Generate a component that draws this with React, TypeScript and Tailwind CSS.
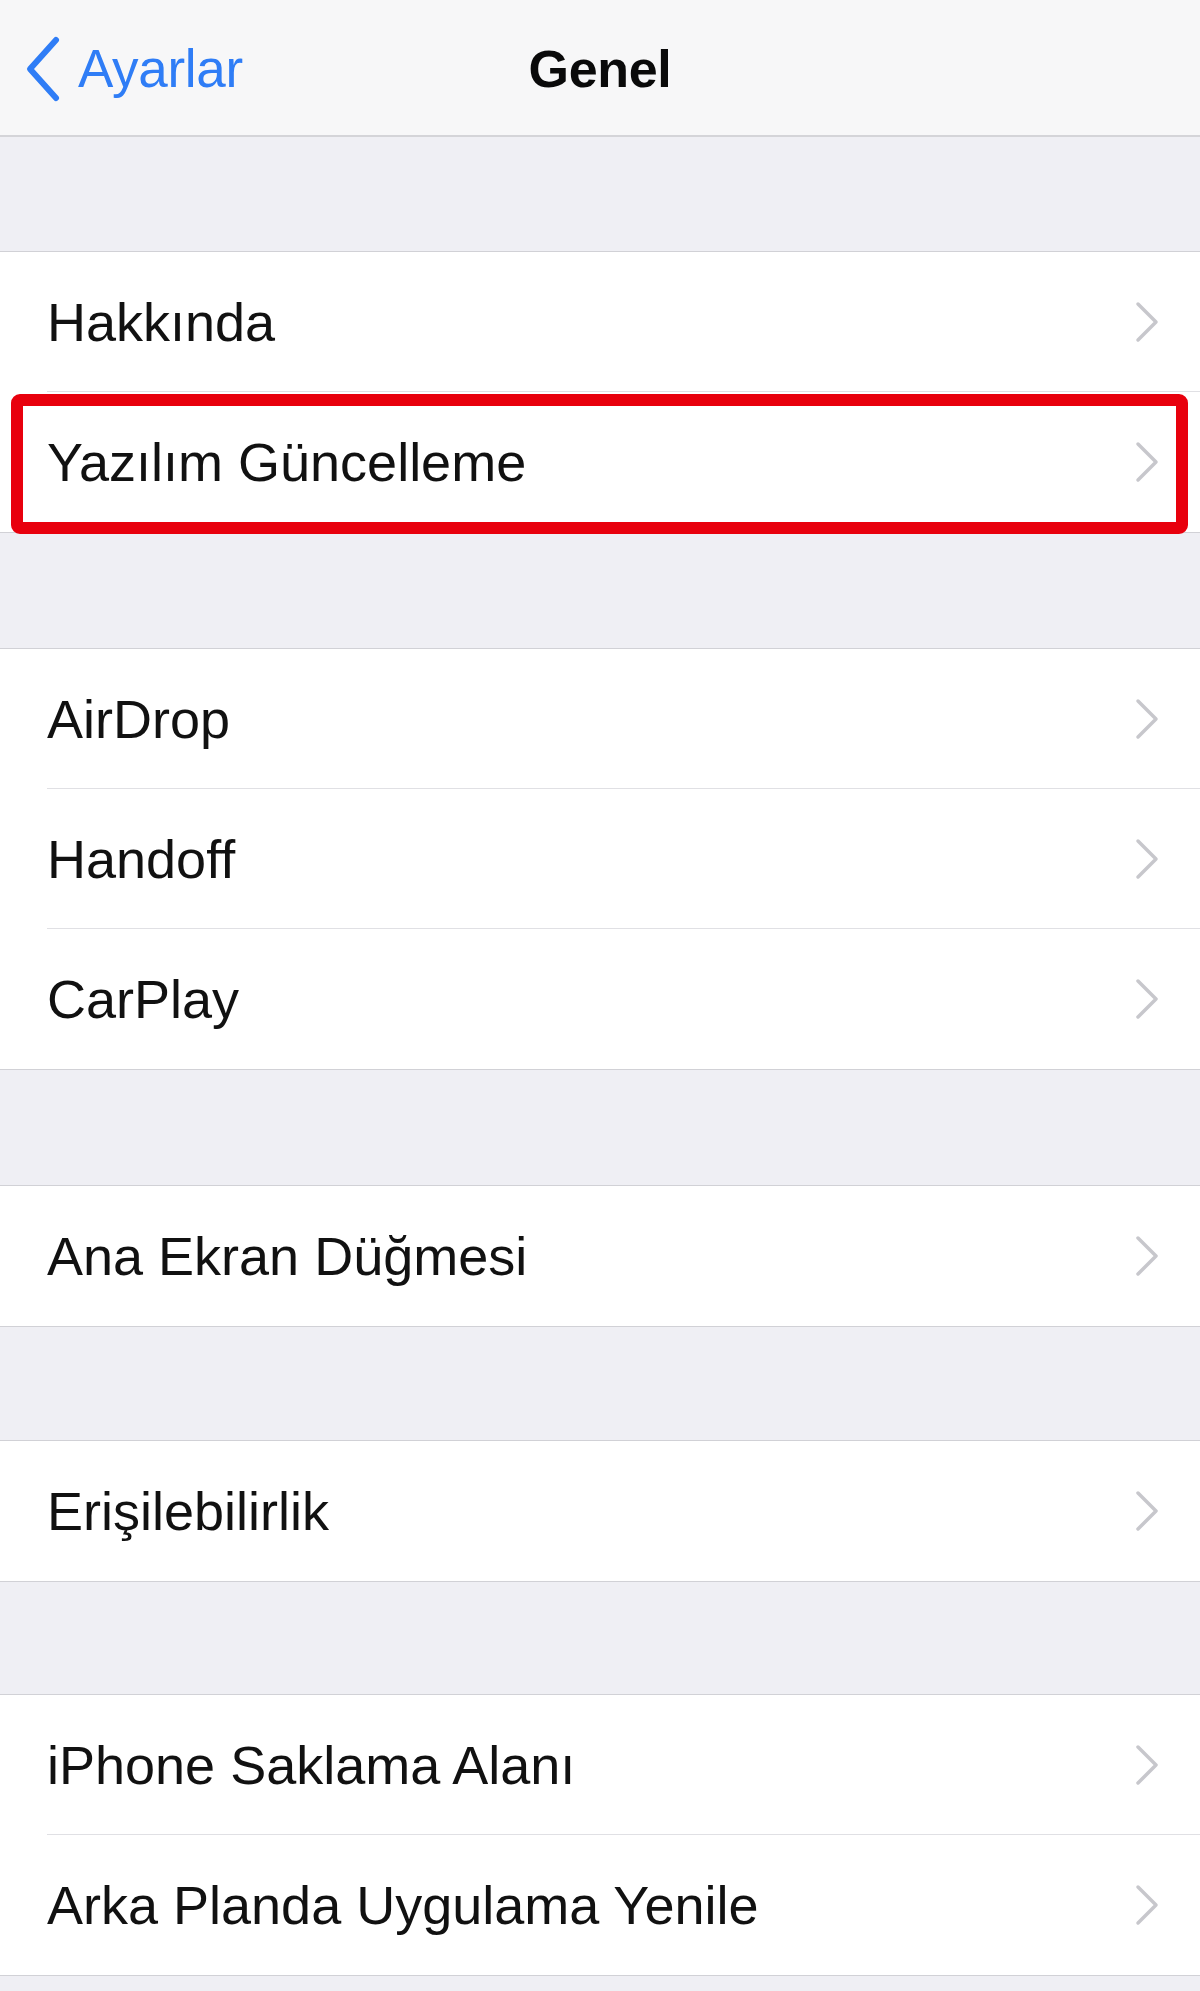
import type { ReactNode } from 'react'

type Group = { items: string[]; gap: string }

const groups: Group[] = [
  { items: ['Hakkında', 'Yazılım Güncelleme'], gap: 'h-[114px]' },
  { items: ['AirDrop', 'Handoff', 'CarPlay'], gap: 'h-[115px]' },
  { items: ['Ana Ekran Düğmesi'], gap: 'h-[115px]' },
  { items: ['Erişilebilirlik'], gap: 'h-[113px]' },
  { items: ['iPhone Saklama Alanı', 'Arka Planda Uygulama Yenile'], gap: 'h-[112px]' },
]

const HIGHLIGHTED = 'Yazılım Güncelleme'

function BackChevron() {
  return (
    <svg width="40" height="68" viewBox="0 0 40 68" fill="none" className="shrink-0">
      <path d="M33 5 L7 34 L33 63" stroke="#2f7df6" strokeWidth="6" strokeLinecap="round" strokeLinejoin="round" />
    </svg>
  )
}

function RowChevron() {
  return (
    <svg width="26" height="42" viewBox="0 0 26 42" fill="none" className="shrink-0">
      <path d="M4 3 L22 21 L4 39" stroke="#c7c7cc" strokeWidth="3.5" strokeLinecap="round" strokeLinejoin="round" />
    </svg>
  )
}

function Row({ label, last, children }: { label: string; last: boolean; children?: ReactNode }) {
  return (
    <div className="relative pl-[47px]">
      <div
        className={
          'h-[140px] flex items-center justify-between pr-[40px] ' +
          (last ? '' : 'border-b border-[#e0e0e4]')
        }
      >
        <span className="text-[54px] leading-none text-[#111111]">{label}</span>
        <RowChevron />
      </div>
      {children}
    </div>
  )
}

export default function App() {
  return (
    <div
      className="min-h-screen w-[1200px] bg-[#efeff4] antialiased"
      style={{ fontFamily: '"Liberation Sans", Arial, sans-serif' }}
    >
      {/* navigation bar */}
      <header className="h-[137px] bg-[#f7f7f8] border-b-2 border-[#d4d4d8] grid grid-cols-[1fr_auto_1fr] items-center">
        <button className="flex items-center gap-[15px] pl-[23px] pt-[2px] text-left">
          <BackChevron />
          <span className="text-[53px] leading-none text-[#2f7df6] tracking-[-0.3px]">Ayarlar</span>
        </button>
        <h1 className="text-[52px] leading-none font-bold text-[#0a0a0a] tracking-[-0.3px] pt-[2px]">Genel</h1>
        <div />
      </header>

      {groups.map((g, gi) => (
        <section key={gi}>
          <div className={g.gap} />
          <div className="bg-white border-y border-[#d1d1d6]">
            {g.items.map((label, i) => (
              <Row key={label} label={label} last={i === g.items.length - 1}>
                {label === HIGHLIGHTED && (
                  <div className="absolute left-[11px] right-[12px] top-[2px] -bottom-[2px] border-[12px] border-[#e8000d] rounded-[9px] pointer-events-none" />
                )}
              </Row>
            ))}
          </div>
        </section>
      ))}
    </div>
  )
}
